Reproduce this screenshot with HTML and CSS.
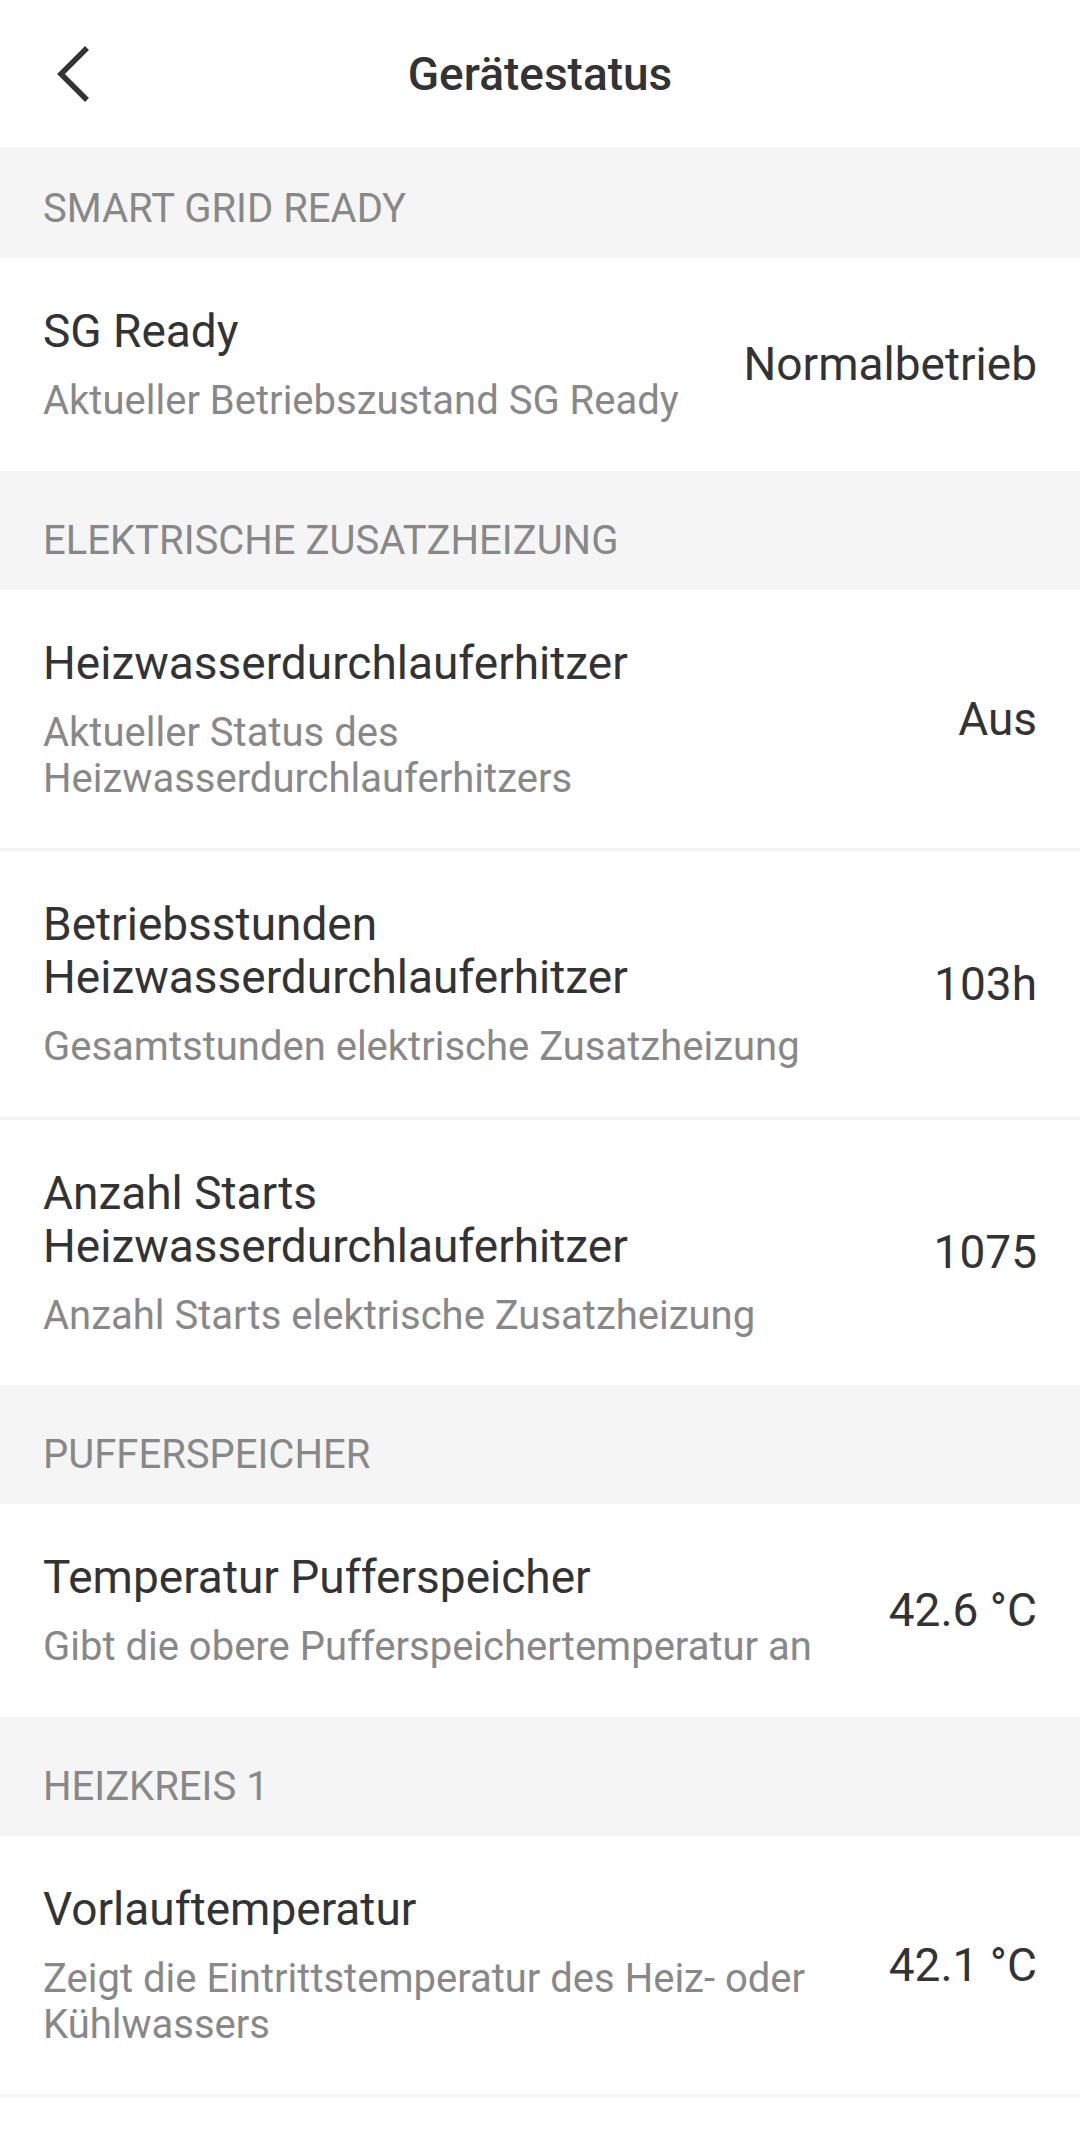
FILE: index.html
```html
<!DOCTYPE html>
<html lang="de">
<head>
    <meta charset="UTF-8">
    <meta name="viewport" content="width=device-width, initial-scale=1.0">
    <title>Gerätestatus</title>
    <link rel="stylesheet" href="styles.css">
</head>
<body>

    <header class="toolbar">
        <button class="back" aria-label="Zurück">
            <svg width="40" height="58" viewBox="0 0 40 58">
                <path d="M32 3 L6 29 L32 55" fill="none" stroke="#333" stroke-width="5.5"/>
            </svg>
        </button>
        <h1 class="toolbar-title">Gerätestatus</h1>
        <span></span>
    </header>

    <main class="status-list">

        <section class="group group-first">
            <h2 class="group-title">SMART GRID READY</h2>
            <div class="item">
                <div class="item-text">
                    <div class="item-label">SG Ready</div>
                    <div class="item-desc">Aktueller Betriebszustand SG Ready</div>
                </div>
                <div class="item-value">Normalbetrieb</div>
            </div>
        </section>

        <section class="group">
            <h2 class="group-title">ELEKTRISCHE ZUSATZHEIZUNG</h2>
            <div class="item">
                <div class="item-text">
                    <div class="item-label">Heizwasserdurchlauferhitzer</div>
                    <div class="item-desc">Aktueller Status des Heizwasserdurchlauferhitzers</div>
                </div>
                <div class="item-value">Aus</div>
            </div>
            <div class="item">
                <div class="item-text">
                    <div class="item-label">Betriebsstunden Heizwasserdurchlauferhitzer</div>
                    <div class="item-desc">Gesamtstunden elektrische Zusatzheizung</div>
                </div>
                <div class="item-value">103h</div>
            </div>
            <div class="item">
                <div class="item-text">
                    <div class="item-label">Anzahl Starts Heizwasserdurchlauferhitzer</div>
                    <div class="item-desc">Anzahl Starts elektrische Zusatzheizung</div>
                </div>
                <div class="item-value">1075</div>
            </div>
        </section>

        <section class="group">
            <h2 class="group-title">PUFFERSPEICHER</h2>
            <div class="item">
                <div class="item-text">
                    <div class="item-label">Temperatur Pufferspeicher</div>
                    <div class="item-desc">Gibt die obere Pufferspeichertemperatur an</div>
                </div>
                <div class="item-value">42.6 °C</div>
            </div>
        </section>

        <section class="group">
            <h2 class="group-title">HEIZKREIS 1</h2>
            <div class="item item-last">
                <div class="item-text">
                    <div class="item-label">Vorlauftemperatur</div>
                    <div class="item-desc">Zeigt die Eintrittstemperatur des Heiz- oder Kühlwassers</div>
                </div>
                <div class="item-value">42.1 °C</div>
            </div>
        </section>

    </main>

</body>
</html>
```

FILE: styles.css
```css
/* Reset */
* {
    margin: 0;
    padding: 0;
    box-sizing: border-box;
}

body {
    font-family: Roboto, 'Noto Sans', sans-serif;
    background-color: #ffffff;
    color: #333333;
}

/* Top bar */
.toolbar {
    height: 147px;
    display: grid;
    grid-template-columns: 1fr auto 1fr;
    align-items: center;
    background: #ffffff;
}

.back {
    justify-self: start;
    margin-left: 55px;
    background: none;
    border: none;
    display: flex;
    cursor: pointer;
}

.toolbar-title {
    font-size: 46px;
    font-weight: 500;
    line-height: 54px;
    color: #333333;
}

/* Groups */
.group-title {
    background-color: #f5f5f5;
    color: #888888;
    font-size: 40px;
    font-weight: 400;
    line-height: 46px;
    padding: 47px 43px 26px;
}

.group-first .group-title {
    padding-top: 39px;
}

/* Rows */
.item {
    display: flex;
    align-items: center;
    gap: 40px;
    padding: 47px 43px 46.5px;
}

.item + .item {
    border-top: 3px solid #f3f3f3;
}

.item-last {
    border-bottom: 3px solid #f3f3f3;
}

.item-text {
    flex: 1;
    display: flex;
    flex-direction: column;
    gap: 20px;
}

.item-label {
    font-size: 46px;
    line-height: 53px;
    color: #333333;
}

.item-desc {
    font-size: 40px;
    line-height: 46px;
    color: #888888;
}

.item-value {
    font-size: 46px;
    line-height: 53px;
    color: #333333;
    white-space: nowrap;
}
```
